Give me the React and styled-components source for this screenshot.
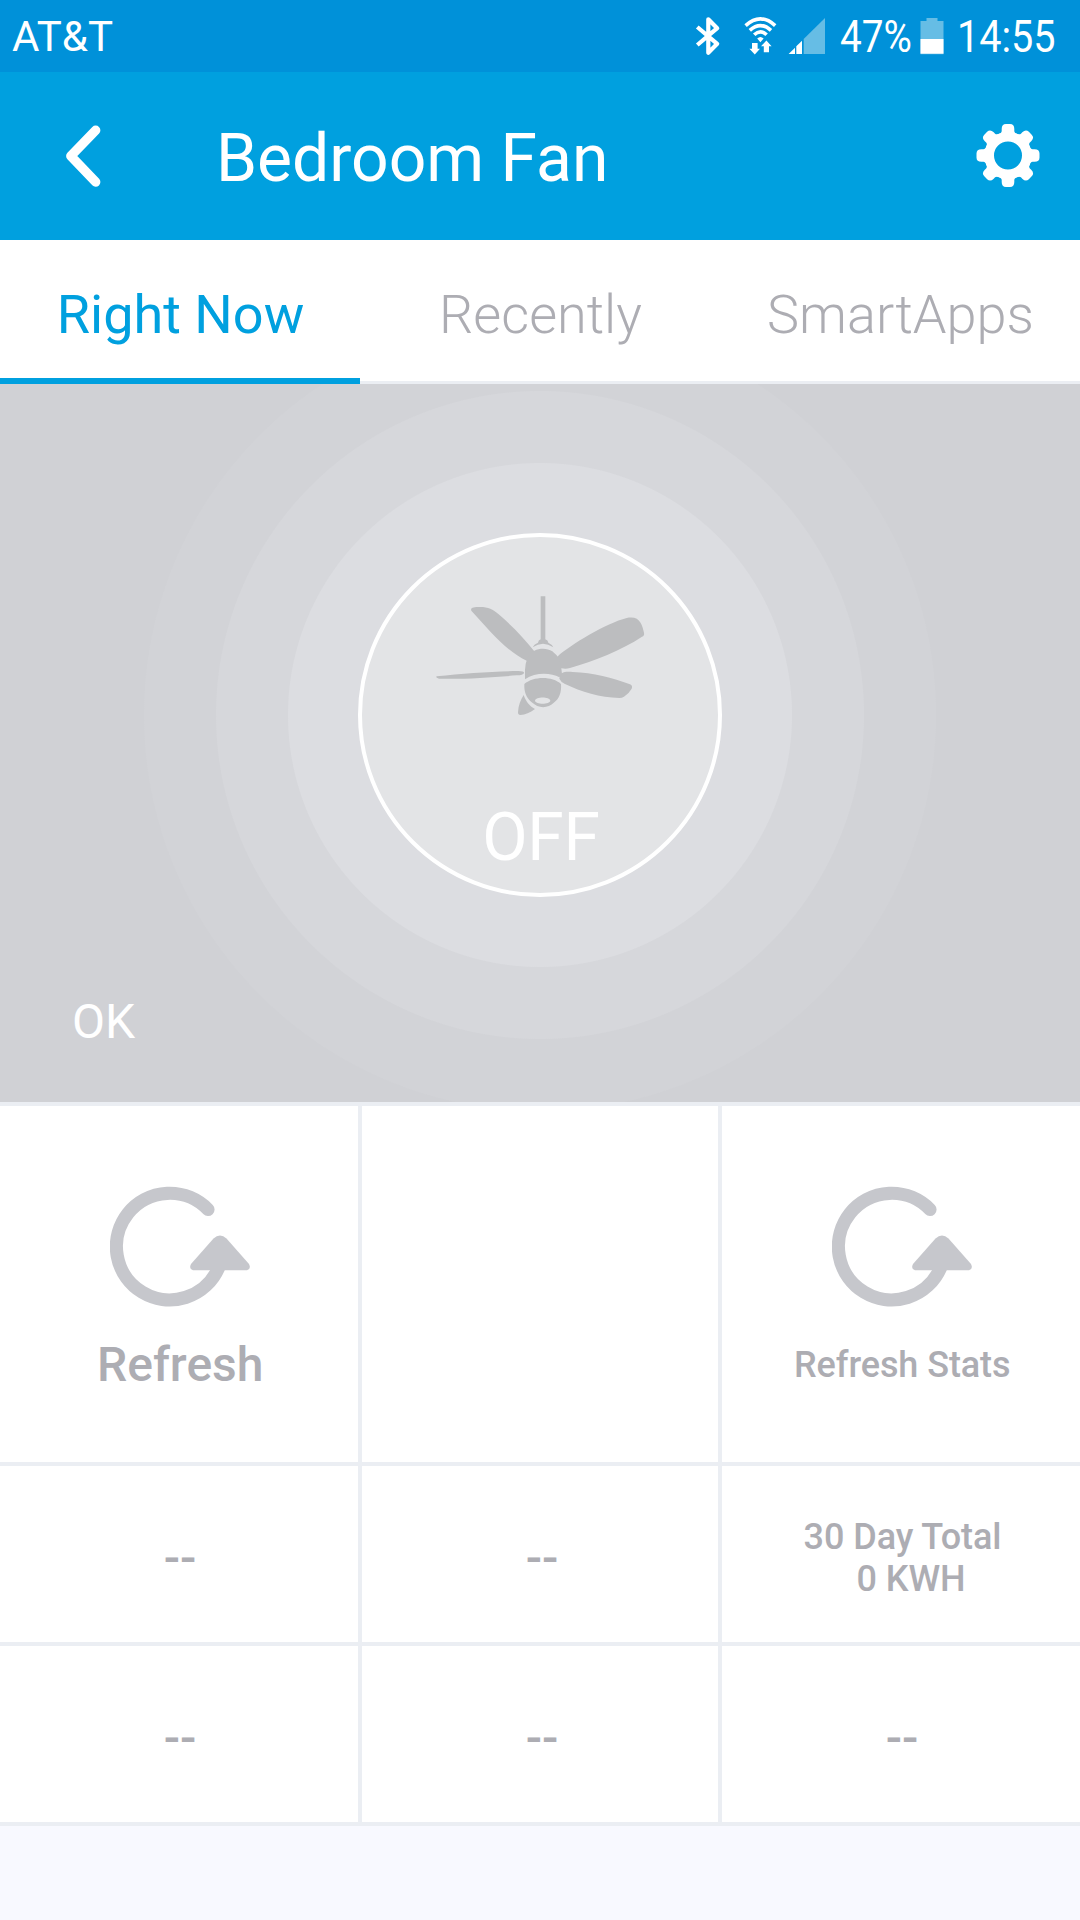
import React from "react";
import styled, { createGlobalStyle } from "styled-components";

const GlobalStyle = createGlobalStyle`
  * { box-sizing: border-box; }
  body {
    margin: 0;
    background: #f8f9ff;
    font-family: Roboto, "Liberation Sans", sans-serif;
  }
  svg { display: block; flex: none; }
`;

const Screen = styled.div`
  width: 1080px;
  height: 1920px;
  display: flex;
  flex-direction: column;
  overflow: hidden;
  background: #f8f9ff;
`;

const StatusBar = styled.header`
  height: 72px;
  padding: 0 24px 0 12px;
  display: flex;
  align-items: center;
  background: #0091d9;
  color: #fff;
`;

const Carrier = styled.span`
  flex: 1;
  padding-top: 1px;
  font-size: 42px;
  line-height: 72px;
`;

const Condensed = styled.span`
  width: ${(p) => p.$width}px;
  margin-left: ${(p) => p.$gap}px;
  padding-top: 2px;
  font-size: 45px;
  line-height: 70px;
  white-space: nowrap;
  transform: scaleX(${(p) => p.$scale});
  transform-origin: left center;
`;

const Spacer = styled.span`
  flex: none;
  width: ${(p) => p.$width}px;
`;

const TitleBar = styled.div`
  height: 168px;
  padding: 0 39px 0 66px;
  display: flex;
  align-items: center;
  background: #00a0df;
  color: #fff;
`;

const Title = styled.h1`
  flex: 1;
  margin: 0;
  padding: 6px 0 0 115px;
  font-size: 66px;
  font-weight: 400;
  line-height: 80px;
`;

const Tabs = styled.nav`
  height: 144px;
  display: grid;
  grid-template-columns: repeat(3, 360px);
  background: #fff;
`;

const Tab = styled.div`
  display: flex;
  align-items: center;
  justify-content: center;
  padding-top: ${(p) => (p.$active ? 11 : 8)}px;
  padding-left: 1px;
  border-bottom: ${(p) => (p.$active ? "6px solid #00a0df" : "3px solid #ebeef3")};
  color: ${(p) => (p.$active ? "#00a0df" : "#adadb3")};
  font-size: 54px;
  font-weight: ${(p) => (p.$active ? 400 : 300)};
  line-height: 64px;
`;

const Hero = styled.section`
  height: 718px;
  padding-top: 149px;
  display: flex;
  flex-direction: column;
  align-items: center;
  color: #fff;
  background: radial-gradient(
    circle at 540px 331px,
    #dcdde1 251.5px,
    #d6d7db 252.5px,
    #d6d7db 323.5px,
    #d2d3d7 324.5px,
    #d2d3d7 395.5px,
    #d0d1d5 396.5px
  );
`;

const Dial = styled.div`
  width: 364px;
  height: 364px;
  padding-top: 56px;
  display: flex;
  flex-direction: column;
  align-items: center;
  border: 4px solid #fff;
  border-radius: 50%;
  background: #e3e4e6;
`;

const DialState = styled.div`
  margin-top: 81px;
  padding-left: 2px;
  font-size: 66px;
  letter-spacing: -0.3px;
  line-height: 80px;
`;

const HeroStatus = styled.div`
  align-self: flex-start;
  margin-top: 97px;
  padding-left: 72px;
  font-size: 48px;
  line-height: 56px;
`;

const Tiles = styled.main`
  display: grid;
  grid-template-columns: 358px 356px 358px;
  grid-template-rows: 356px 176px 176px;
  gap: 4px;
  padding: 4px 0;
  background: #ebeef3;
`;

const Tile = styled.div`
  display: flex;
  flex-direction: column;
  align-items: center;
  justify-content: ${(p) => (p.$action ? "flex-start" : "center")};
  padding-top: ${(p) => (p.$action ? 80 : 7)}px;
  padding-left: ${(p) => (p.$middle ? 4 : 2)}px;
  background: #fff;
  color: #adadb3;
  font-weight: 500;
  font-size: ${(p) => (p.$small ? 36 : 48)}px;
  letter-spacing: ${(p) => (p.$small ? -0.08 : 0)}px;
  line-height: ${(p) => (p.$small ? 42 : 56)}px;
`;

const ActionLabel = styled.div`
  margin-top: 29px;
  padding-left: 0.5px;
  line-height: 56px;
`;

const ReadoutLine = styled.div`
  padding-left: ${(p) => p.$indent || 1}px;
`;

const light = "#66bde5";

const BluetoothIcon = () => (
  <svg width="26" height="40" viewBox="695 15 26 40" fill="none" stroke="#fff" strokeWidth="4.2" strokeLinejoin="round">
    <path d="M697.3 26 L717.2 42.8 L708.3 51.7 V18.3 L717.2 27.2 L697.3 44" />
  </svg>
);

const WifiIcon = () => (
  <svg width="34" height="40" viewBox="744 15 34 40" fill="none" stroke="#fff" strokeWidth="3.6">
    <path d="M745.6 24.6 Q760.4 11.2 775.2 24.6" />
    <path d="M749.8 29.3 Q760.4 19.8 771 29.3" />
    <path d="M754.2 33.8 Q760.4 27.8 766.6 33.8" />
    <path d="M757.2 37.6 Q760.4 34.6 763.6 37.6 L760.4 41.2 Z" fill="#fff" stroke="none" />
    <path d="M752 42 H757.6 V47.8 H760 L754.8 53.4 L749.4 47.8 H752 Z" fill="#fff" stroke="none" />
    <path d="M763.8 51.2 V45.2 H761 L766.4 39.6 L771.6 45.2 H769 V51.2 Z" fill="#fff" stroke="none" />
  </svg>
);

const SignalIcon = () => (
  <svg width="38" height="40" viewBox="788 15 38 40">
    <path d="M788.6 53 L795 46.7 V53 Z" fill="#fff" />
    <path d="M796.3 53 V45.3 L802 39.7 V53 Z" fill="#fff" />
    <path d="M803.7 53 V38 L825 17 V53 Z" fill={light} />
  </svg>
);

const BatteryIcon = () => (
  <svg width="24" height="40" viewBox="920.5 15 24 40">
    <path d="M921 20 H927 V17 H938 V20 H944 V53.3 H921 Z" fill={light} />
    <rect x="921" y="38" width="23" height="14.7" fill="#fff" />
  </svg>
);

const BackIcon = () => (
  <svg width="35" height="64" viewBox="66 124 35 64" fill="none" stroke="#fff" strokeWidth="9.4" strokeLinecap="round" strokeLinejoin="round">
    <path d="M95.7 130.3 L70.8 156 L95.7 182" />
  </svg>
);

const GearIcon = () => (
  <svg width="66" height="66" viewBox="-33 -32.5 66 66">
    <circle r="18.8" fill="none" stroke="#fff" strokeWidth="9.6" />
    {[0, 45, 90, 135, 180, 225, 270, 315].map((angle) => (
      <path
        key={angle}
        transform={`rotate(${angle})`}
        fill="#fff"
        d="M-10 -21 Q-6.3 -22.6 -6.3 -24.6 V-26.5 Q-6.3 -31.5 -2 -31.5 H2 Q6.3 -31.5 6.3 -26.5 V-24.6 Q6.3 -22.6 10 -21 Z"
      />
    ))}
  </svg>
);

const FanIcon = () => (
  <svg width="214" height="124" viewBox="279 249 642 372" fill="#bcbdbf">
    <path d="M602 259 H616 V388 Q624 391 625 398 Q636 403 640 412 Q609 391 578 412 Q583 402 594 398 Q595 391 602 388 Z" />
    <path d="M394 302 C390 292 402 291 420 291 C446 291 458 298 476 313 C516 347 552 384 583 424 L600 440 L575 465 L560 452 C500 425 448 361 394 302 Z" />
    <path d="M652 440 C690 405 800 339 860 324 C900 316 906 344 912 368 Q914 377 906 380 C846 420 760 454 690 474 C680 477 672 476 664 475 L640 470 L635 445 Z" />
    <path d="M660 494 C668 485 682 485 698 486 C760 488 818 504 870 523 Q879 527 875 536 Q868 549 852 560 Q846 564 838 564 C780 562 724 546 675 522 Q664 518 658 506 Z" />
    <path d="M290 499 C370 490 460 484 535 483 Q554 484 552 489 Q550 496 530 496 C460 502 370 508 297 506 Q285 503 290 499 Z" />
    <path d="M555 508 V479 C557 466 556 460 560 452 C563 439 570 430 583 422 C600 414 622 414 637 424 C648 433 654 440 657 447 L664 475 L666 492 L658 502 C633 488 586 486 555 508 Z" />
    <path fillRule="evenodd" d="M553 522 C580 498 638 498 663 522 C665 548 657 566 643 577 C622 597 596 596 575 577 C558 562 552 546 553 522 Z M585 572 C587 584 629 584 631 572 C629 559 587 559 585 572 Z" />
    <path d="M551 555 C557 573 568 588 585 597 C570 608 556 614 541 615 Q534 615 534 607 C535 586 542 569 551 555 Z" />
  </svg>
);

const RefreshIcon = () => (
  <svg width="140" height="122" viewBox="110 1186 140 122" fill="none" stroke="#c6c7cc">
    <path d="M208 1209.5 A53.3 53.3 0 1 0 218.5 1268" strokeWidth="13.2" strokeLinecap="round" />
    <path
      d="M213.5 1238.5 Q220 1232.5 226.5 1238.5 L249 1264 Q251.5 1269 247 1270.2 H193 Q188.5 1269 191 1264 Z"
      fill="#c6c7cc"
      stroke="none"
    />
  </svg>
);

export default function App() {
  return (
    <>
      <GlobalStyle />
      <Screen>
        <StatusBar>
          <Carrier>AT&amp;T</Carrier>
          <BluetoothIcon />
          <Spacer $width={23} />
          <WifiIcon />
          <Spacer $width={10} />
          <SignalIcon />
          <Condensed $width={72} $gap={14} $scale={0.86}>47%</Condensed>
          <Spacer $width={7.5} />
          <BatteryIcon />
          <Condensed $width={99} $gap={13.5} $scale={0.88}>14:55</Condensed>
        </StatusBar>
        <TitleBar>
          <BackIcon />
          <Title>Bedroom Fan</Title>
          <GearIcon />
        </TitleBar>
        <Tabs>
          <Tab $active>Right Now</Tab>
          <Tab>Recently</Tab>
          <Tab>SmartApps</Tab>
        </Tabs>
        <Hero>
          <Dial>
            <FanIcon />
            <DialState>OFF</DialState>
          </Dial>
          <HeroStatus>OK</HeroStatus>
        </Hero>
        <Tiles>
          <Tile $action>
            <RefreshIcon />
            <ActionLabel>Refresh</ActionLabel>
          </Tile>
          <Tile $middle />
          <Tile $action $small>
            <RefreshIcon />
            <ActionLabel>Refresh Stats</ActionLabel>
          </Tile>
          <Tile>--</Tile>
          <Tile $middle>--</Tile>
          <Tile $small>
            <ReadoutLine>30 Day Total</ReadoutLine>
            <ReadoutLine $indent={18}>0 KWH</ReadoutLine>
          </Tile>
          <Tile>--</Tile>
          <Tile $middle>--</Tile>
          <Tile>--</Tile>
        </Tiles>
      </Screen>
    </>
  );
}
